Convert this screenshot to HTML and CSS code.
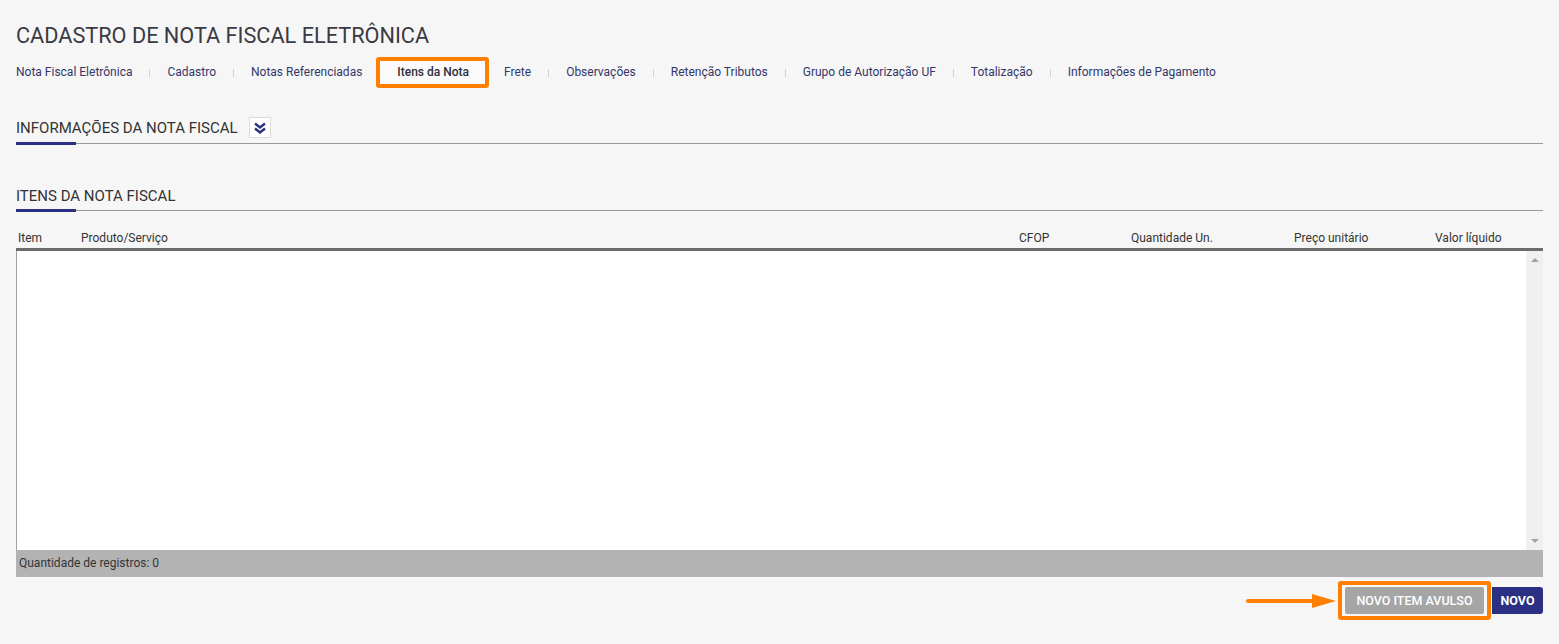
FILE: index.html
```html
<!DOCTYPE html>
<html lang="pt-BR">
<head>
    <meta charset="UTF-8">
    <title>Cadastro de Nota Fiscal Eletrônica</title>
    <link rel="stylesheet" href="styles.css">
</head>
<body>
    <div class="page">
        <h1 class="title">CADASTRO DE NOTA FISCAL ELETRÔNICA</h1>

        <!-- Abas -->
        <ul class="tabs">
            <li class="tab">Nota Fiscal Eletrônica</li>
            <li class="tab">Cadastro</li>
            <li class="tab">Notas Referenciadas</li>
            <li class="tab active">Itens da Nota</li>
            <li class="tab">Frete</li>
            <li class="tab">Observações</li>
            <li class="tab">Retenção Tributos</li>
            <li class="tab">Grupo de Autorização UF</li>
            <li class="tab">Totalização</li>
            <li class="tab">Informações de Pagamento</li>
        </ul>

        <div class="section-head first">
            <span>INFORMAÇÕES DA NOTA FISCAL</span>
            <span class="toggle">
                <svg width="14" height="14" viewBox="0 0 14 14">
                    <path d="M2 2.5 L7 6.5 L12 2.5" fill="none" stroke="#2b3082" stroke-width="2.4"/>
                    <path d="M2 7.5 L7 11.5 L12 7.5" fill="none" stroke="#2b3082" stroke-width="2.4"/>
                </svg>
            </span>
        </div>

        <div class="section-head second">
            <span>ITENS DA NOTA FISCAL</span>
        </div>

        <!-- Grade de itens -->
        <div class="grid-head">
            <div>Item</div>
            <div>Produto/Serviço</div>
            <div>CFOP</div>
            <div>Quantidade Un.</div>
            <div>Preço unitário</div>
            <div>Valor líquido</div>
        </div>
        <div class="grid-body">
            <div class="rows"></div>
            <div class="scrollbar">
                <span class="arrow up"></span>
                <span class="arrow down"></span>
            </div>
        </div>
        <div class="grid-foot">Quantidade de registros: 0</div>

        <div class="actions">
            <span class="pointer">
                <svg width="92" height="16" viewBox="0 0 92 16">
                    <line x1="2" y1="8" x2="70" y2="8" stroke="#ff8000" stroke-width="4" stroke-linecap="round"/>
                    <polygon points="66,1 90,8 66,15" fill="#ff8000"/>
                </svg>
            </span>
            <span class="highlight">
                <button class="btn btn-gray">NOVO ITEM AVULSO</button>
            </span>
            <button class="btn btn-blue">NOVO</button>
        </div>
    </div>
</body>
</html>
```

FILE: styles.css
```css
/* Estilos gerais */
body {
    margin: 0;
    background-color: #f6f6f6;
    color: #333;
    font-family: 'Roboto', 'Liberation Sans', sans-serif;
}

.page {
    padding: 0 16px;
}

.title {
    margin: 23px 0 0 0;
    font-size: 21.7px;
    font-weight: 400;
    line-height: 26px;
    color: #3a3a44;
}

/* Abas */
.tabs {
    display: flex;
    align-items: center;
    list-style: none;
    margin: 8px 0 0 0;
    padding: 0;
    height: 31px;
}

.tab {
    position: relative;
    padding: 0 17px 0 18px;
    font-size: 12px;
    color: #34366a;
    line-height: 31px;
}

.tab:first-child {
    padding-left: 0;
}

.tab + .tab::before {
    content: "";
    position: absolute;
    left: 0;
    top: 12px;
    width: 1px;
    height: 8px;
    background-color: #d0d0d0;
}

.tab.active {
    font-weight: 500;
    color: #2e2e3e;
    padding: 0 16px 0 17px;
    margin: 0 -3px 0 -3px;
    background-color: #fafafa;
    border: 4px solid #ff8000;
    border-radius: 3px;
    line-height: 23px;
    z-index: 1;
}

.tab.active::before,
.tab.active + .tab::before {
    display: none;
}

/* Cabeçalhos das seções */
.section-head {
    position: relative;
    display: flex;
    align-items: center;
    height: 21px;
    font-size: 15px;
    color: #333;
    border-bottom: 1px solid #999;
}

.section-head::after {
    content: "";
    position: absolute;
    left: 0;
    bottom: -2px;
    width: 60px;
    height: 3px;
    background-color: #2b3082;
}

.section-head.first {
    margin-top: 29px;
    padding-bottom: 5px;
}

.section-head.second {
    margin-top: 41px;
    padding-bottom: 4px;
}

.toggle {
    display: flex;
    align-items: center;
    justify-content: center;
    width: 20px;
    height: 19px;
    margin-left: 11px;
    background-color: #fff;
    border: 1px solid #ddd;
}

/* Grade */
.grid-head {
    display: grid;
    grid-template-columns: 63px 938px 112px 163px 141px 1fr;
    margin-top: 17px;
    height: 20px;
    line-height: 20px;
    font-size: 12px;
    color: #333;
    border-bottom: 3px solid #6b6b6b;
}

.grid-head div {
    padding-left: 2px;
}

.grid-body {
    display: flex;
    height: 299px;
    background-color: #fff;
    border-left: 1px solid #a0a0a0;
}

.rows {
    flex: 1;
}

.scrollbar {
    display: flex;
    flex-direction: column;
    justify-content: space-between;
    align-items: center;
    width: 17px;
    padding: 7px 0;
    background-color: #f0f0f0;
}

.arrow {
    width: 0;
    height: 0;
    border-left: 4px solid transparent;
    border-right: 4px solid transparent;
}

.arrow.up {
    border-bottom: 4px solid #a3a3a3;
}

.arrow.down {
    border-top: 4px solid #a3a3a3;
}

.grid-foot {
    height: 27px;
    line-height: 27px;
    padding-left: 3px;
    font-size: 12px;
    color: #333;
    background-color: #b3b3b3;
}

/* Botões */
.actions {
    display: flex;
    justify-content: flex-end;
    align-items: center;
    margin-top: 4px;
}

.pointer {
    display: flex;
}

.highlight {
    display: flex;
    padding: 2px 3px;
    border: 4px solid #ff8000;
    border-radius: 3px;
}

.btn {
    height: 27px;
    padding: 0;
    border: none;
    font-family: 'Roboto', 'Liberation Sans', sans-serif;
    font-size: 12.5px;
    font-weight: 500;
    color: #fff;
    cursor: pointer;
}

.btn-gray {
    width: 139px;
    background-color: #a5a5a5;
    border-radius: 2px;
}

.btn-blue {
    width: 51px;
    margin-left: 1px;
    font-weight: 700;
    background-color: #2b3082;
    border-radius: 0 3px 3px 0;
}
```
